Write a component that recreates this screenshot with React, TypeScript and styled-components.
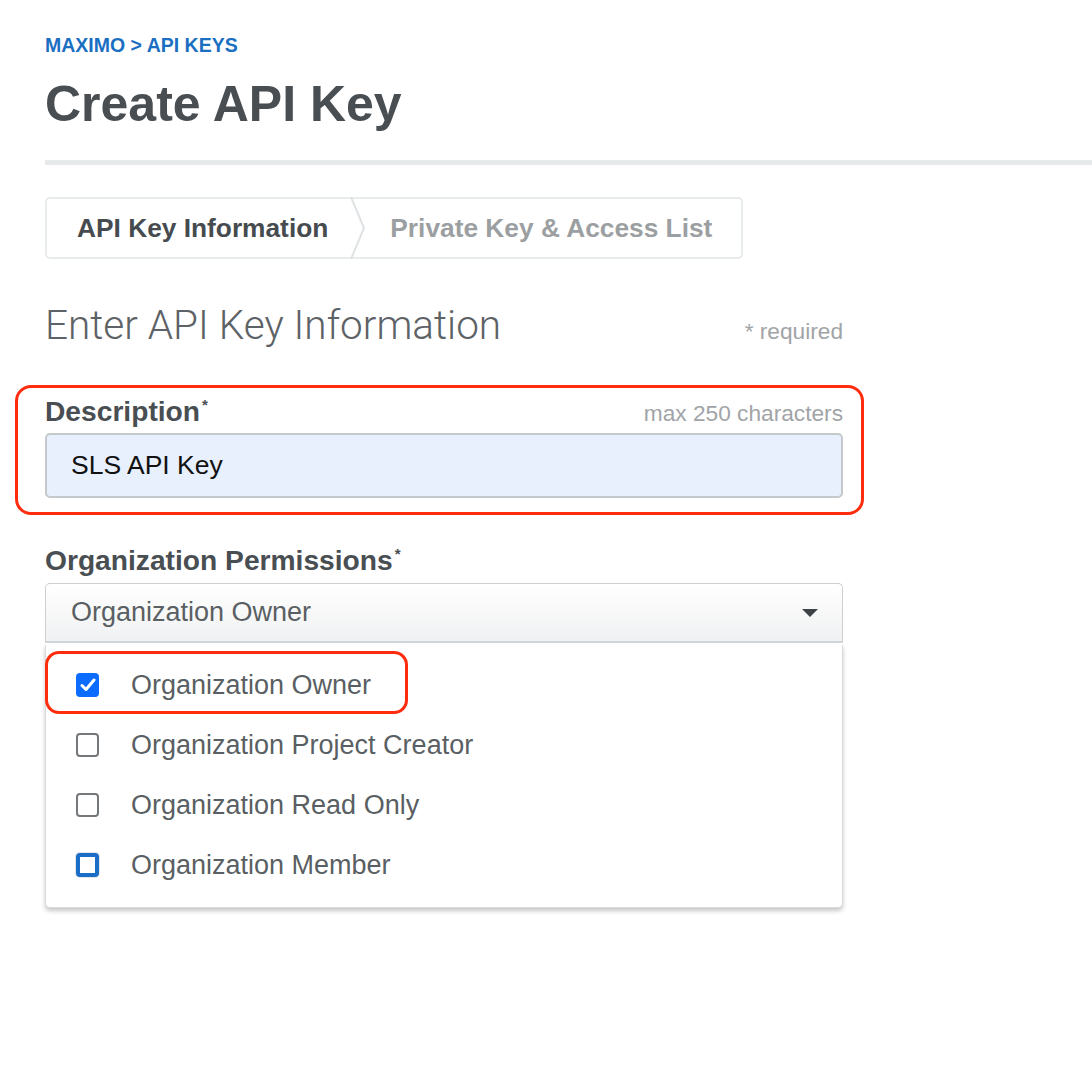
import React from 'react';
import styled, { createGlobalStyle } from 'styled-components';

const GlobalStyle = createGlobalStyle`
  html, body {
    margin: 0;
    background: #ffffff;
  }
  body {
    font-family: "Liberation Sans", Arial, sans-serif;
    color: #494e52;
  }
`;

const Page = styled.div`
	box-sizing: border-box;
	min-height: 100vh;
	padding: 33px 0 40px 45px;
`;

const Breadcrumb = styled.div`
	font-size: 19.5px;
	line-height: 24px;
	font-weight: bold;
	color: #1b6fc2;
	text-transform: uppercase;
`;

const Title = styled.h1`
	margin: 17px 0 0;
	font-size: 50px;
	line-height: 60px;
	font-weight: bold;
	color: #494e52;
`;

const Rule = styled.div`
	margin-top: 26px;
	height: 5px;
	background: #e7eaeb;
`;

const Content = styled.div`
	width: 798px;
`;

const Steps = styled.div`
	margin-top: 32px;
	display: flex;
	align-items: center;
	width: 694px;
	height: 58px;
	border: 2px solid #e8ebec;
	border-radius: 5px;
`;

const Step = styled.div<{ $active?: boolean }>`
	font-size: 26.3px;
	font-weight: bold;
	white-space: nowrap;
	color: ${(props) => (props.$active ? '#464b4f' : '#9c9fa2')};
	margin-left: ${(props) => (props.$active ? '30px' : '25px')};
`;

const Chevron = styled.svg`
	margin-left: 23px;
	flex: none;
	overflow: visible;
`;

const SectionHeader = styled.div`
	margin-top: 41px;
	height: 50px;
	display: flex;
	justify-content: space-between;
	align-items: baseline;
`;

const SectionTitle = styled.h2`
	margin: 0;
	font-family: Roboto, "Liberation Sans", sans-serif;
	font-weight: 300;
	font-size: 40.5px;
	line-height: 50px;
	color: #5d6266;
`;

const Hint = styled.span`
	font-size: 22.7px;
	line-height: 24px;
	color: #a1a4a7;
`;

const Field = styled.div<{ $gap: number }>`
	position: relative;
	margin-top: ${(props) => props.$gap}px;
`;

const Highlight = styled.span<{ $radius: number }>`
	position: absolute;
	box-sizing: border-box;
	border: 3px solid #ff2d0d;
	border-radius: ${(props) => props.$radius}px;
	pointer-events: none;
	z-index: 3;
`;

const LabelRow = styled.div`
	display: flex;
	justify-content: space-between;
	align-items: baseline;
	height: 32px;
`;

const Label = styled.label`
	display: block;
	height: 32px;
	font-size: 28.2px;
	line-height: 32px;
	font-weight: bold;
	color: #494e52;

	sup {
		position: relative;
		top: -11px;
		font-size: 15px;
		line-height: 0;
		vertical-align: baseline;
		margin-left: 2px;
	}
`;

const TextInput = styled.div`
	margin-top: 6px;
	box-sizing: border-box;
	height: 65px;
	display: flex;
	align-items: center;
	padding-left: 24px;
	background: #e8f0fe;
	border: 2px solid #c6c9cb;
	border-radius: 5px;
	font-size: 26.5px;
	color: #111111;
`;

const SelectWrap = styled.div`
	position: relative;
	margin-top: 7px;
`;

const SelectBox = styled.div`
	box-sizing: border-box;
	height: 60px;
	display: flex;
	align-items: center;
	justify-content: space-between;
	padding: 0 24px 0 25px;
	background: linear-gradient(#ffffff, #f0f1f2);
	border: 1px solid #cdd0d2;
	border-bottom: 2px solid #d2d5d7;
	border-radius: 5px 5px 0 0;
	font-size: 27px;
	color: #5a5f63;
`;

const Caret = styled.span`
	width: 0;
	height: 0;
	border-left: 8px solid transparent;
	border-right: 8px solid transparent;
	border-top: 8px solid #3d4246;
`;

const Menu = styled.ul`
	position: absolute;
	top: calc(100% + 2px);
	left: 0;
	right: 0;
	margin: 0;
	padding: 10px 0 12px;
	list-style: none;
	background: #ffffff;
	border: 1px solid #d8dbdd;
	border-top: none;
	border-radius: 0 0 5px 5px;
	box-shadow: 0 3px 4px rgba(0, 0, 0, 0.22);
	z-index: 2;
`;

const Option = styled.li`
	position: relative;
	height: 60px;
	display: flex;
	align-items: center;
	padding-left: 30px;
	font-size: 27px;
	color: #5a5f63;
`;

const Box = styled.span<{ $state: 'checked' | 'empty' | 'focus' }>`
	flex: none;
	box-sizing: border-box;
	width: 23px;
	height: 24px;
	margin-right: 32px;
	border-radius: 4px;
	display: flex;
	align-items: center;
	justify-content: center;
	background: ${(props) => (props.$state === 'checked' ? '#0b6cff' : '#ffffff')};
	border: ${(props) =>
		props.$state === 'checked'
			? 'none'
			: props.$state === 'focus'
			? '4px solid #1a6ec8'
			: '2px solid #75787b'};
	box-shadow: ${(props) =>
		props.$state === 'focus' ? '0 0 0 1px #e2e4e6' : 'none'};
`;

const options = [
	{ label: 'Organization Owner', state: 'checked' as const },
	{ label: 'Organization Project Creator', state: 'empty' as const },
	{ label: 'Organization Read Only', state: 'empty' as const },
	{ label: 'Organization Member', state: 'focus' as const },
];

const App: React.FC = () => {
	return (
		<>
			<GlobalStyle />
			<Page>
				<Breadcrumb>Maximo &gt; API Keys</Breadcrumb>
				<Title>Create API Key</Title>
				<Rule />
				<Content>
					<Steps>
						<Step $active>API Key Information</Step>
						<Chevron width="14" height="58" viewBox="0 0 14 58">
							<polyline
								points="0,-2 13,29 0,60"
								fill="none"
								stroke="#dfe2e4"
								strokeWidth="2"
							/>
						</Chevron>
						<Step>Private Key &amp; Access List</Step>
					</Steps>

					<SectionHeader>
						<SectionTitle>Enter API Key Information</SectionTitle>
						<Hint>* required</Hint>
					</SectionHeader>

					<Field $gap={45}>
						<Highlight
							$radius={16}
							style={{ left: -30, right: -21, top: -10, bottom: -17 }}
						/>
						<LabelRow>
							<Label>
								Description<sup>*</sup>
							</Label>
							<Hint>max 250 characters</Hint>
						</LabelRow>
						<TextInput>SLS API Key</TextInput>
					</Field>

					<Field $gap={46}>
						<Label>
							Organization Permissions<sup>*</sup>
						</Label>
						<SelectWrap>
							<SelectBox>
								Organization Owner
								<Caret />
							</SelectBox>
							<Menu>
								{options.map((opt, i) => (
									<Option key={opt.label}>
										{i === 0 && (
											<Highlight
												$radius={14}
												style={{ left: -1, top: -4, width: 363, height: 63 }}
											/>
										)}
										<Box $state={opt.state}>
											{opt.state === 'checked' && (
												<svg width="16" height="14" viewBox="0 0 16 14">
													<path
														d="M2 7.5 L6 11.5 L14 2"
														fill="none"
														stroke="#ffffff"
														strokeWidth="3"
														strokeLinecap="round"
														strokeLinejoin="round"
													/>
												</svg>
											)}
										</Box>
										{opt.label}
									</Option>
								))}
							</Menu>
						</SelectWrap>
					</Field>
				</Content>
			</Page>
		</>
	);
};

export default App;
